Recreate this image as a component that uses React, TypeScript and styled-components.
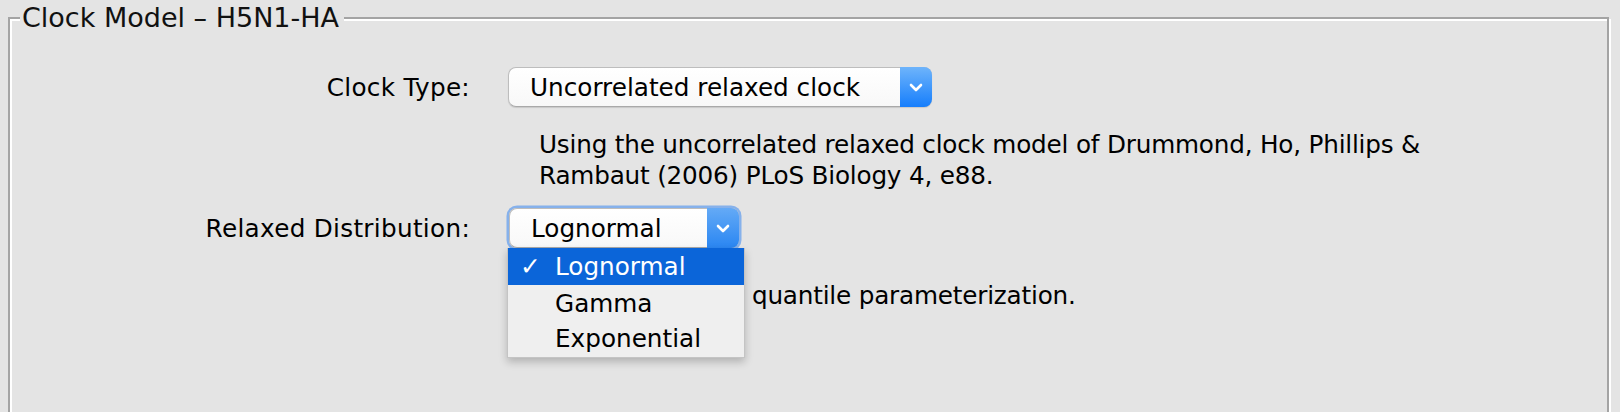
import React from "react";
import styled, { createGlobalStyle } from "styled-components";

const Global = createGlobalStyle`
  html, body { margin: 0; padding: 0; background: #e4e4e4; }
  body {
    font-family: "DejaVu Sans", "Liberation Sans", sans-serif;
    font-size: 24.7px;
    color: #000;
    -webkit-font-smoothing: antialiased;
  }
`;

const Page = styled.div`
  padding: 3px 11px 0 8px;
  height: 412px;
  box-sizing: border-box;
  overflow: hidden;
`;

const Panel = styled.fieldset`
  margin: 0;
  padding: 0;
  min-width: 0;
  height: 470px;
  border: 2px solid #a4a4a4;
  box-shadow: inset 2px 2px 0 #ffffff, 2px 2px 0 #ffffff;
`;

const Legend = styled.legend`
  margin-left: 10px;
  padding: 0 5px 0 2px;
  line-height: 30px;
  font-size: 27px;
  background: #e4e4e4;
  color: #111;
`;

const Row = styled.div<{ $top: number }>`
  display: grid;
  grid-template-columns: 460px auto;
  column-gap: 38px;
  align-items: center;
  justify-items: start;
  margin-top: ${(p) => p.$top}px;
`;

const Label = styled.div`
  justify-self: end;
  white-space: nowrap;
  letter-spacing: 0.3px;
`;

const Desc = styled.div`
  grid-column: 2;
  padding-left: 31px;
  line-height: 31px;
  white-space: nowrap;
  letter-spacing: -0.2px;
`;

const Covered = styled.span`
  letter-spacing: -0.45px;
`;

const ComboWrap = styled.div`
  position: relative;
  margin-left: 1px;
`;

const Combo = styled.div<{ $width: number; $focused?: boolean }>`
  display: flex;
  align-items: stretch;
  width: ${(p) => p.$width}px;
  height: 40px;
  box-sizing: border-box;
  border: 1px solid #bdbdbd;
  border-bottom-color: #a9a9a9;
  border-radius: 8px;
  background: linear-gradient(#ffffff, #f8f8f8);
  box-shadow: ${(p) =>
    p.$focused
      ? "0 0 0 2.5px rgba(118, 168, 236, 0.85)"
      : "0 1px 1px rgba(0, 0, 0, 0.12)"};
`;

const ComboText = styled.div`
  flex: 1;
  display: flex;
  align-items: center;
  padding-left: 21px;
  white-space: nowrap;
`;

const Arrow = styled.div<{ $focused?: boolean }>`
  width: 32px;
  margin: -1px -1px -1px 0;
  border-radius: 0 8px 8px 0;
  background: ${(p) =>
    p.$focused
      ? "linear-gradient(#64aaf6, #2a86f2)"
      : "linear-gradient(#6eb4fb, #167efc)"};
  display: flex;
  align-items: center;
  justify-content: center;
`;

const Menu = styled.div`
  position: absolute;
  top: 100%;
  left: -2px;
  width: 238px;
  box-sizing: border-box;
  background: #efefef;
  border: 1px solid #c4c4c4;
  border-top: none;
  box-shadow: 0 4px 8px rgba(0, 0, 0, 0.22);
  padding-bottom: 1px;
  z-index: 2;
`;

const Item = styled.div<{ $h: number; $selected?: boolean }>`
  display: flex;
  align-items: center;
  height: ${(p) => p.$h}px;
  padding-left: 12px;
  background: ${(p) => (p.$selected ? "#0b65d9" : "transparent")};
  color: ${(p) => (p.$selected ? "#ffffff" : "#000")};
  white-space: nowrap;
`;

const Check = styled.span`
  width: 35px;
  flex: none;
  font-weight: bold;
`;

const Chevron = () => (
  <svg width="14" height="9" viewBox="0 0 14 9">
    <path d="M2 2 L7 7 L12 2" fill="none" stroke="#fff" strokeWidth="2.6" strokeLinecap="round" strokeLinejoin="round" />
  </svg>
);

export default function App() {
  return (
    <>
      <Global />
      <Page>
        <Panel>
          <Legend>Clock Model – H5N1-HA</Legend>
          <Row $top={34}>
            <Label>Clock Type:</Label>
            <Combo $width={424}>
              <ComboText>Uncorrelated relaxed clock</ComboText>
              <Arrow>
                <Chevron />
              </Arrow>
            </Combo>
          </Row>
          <Row $top={22}>
            <Desc>
              Using the uncorrelated relaxed clock model of Drummond, Ho, Phillips &amp;
              <br />
              Rambaut (2006) PLoS Biology 4, e88.
            </Desc>
          </Row>
          <Row $top={17}>
            <Label>Relaxed Distribution:</Label>
            <ComboWrap>
              <Combo $width={230} $focused>
                <ComboText>Lognormal</ComboText>
                <Arrow $focused>
                  <Chevron />
                </Arrow>
              </Combo>
              <Menu>
                <Item $h={37} $selected>
                  <Check>✓</Check>Lognormal
                </Item>
                <Item $h={36}>
                  <Check />Gamma
                </Item>
                <Item $h={35}>
                  <Check />Exponential
                </Item>
              </Menu>
            </ComboWrap>
          </Row>
          <Row $top={32}>
            <Desc>
              <Covered>Using continuous </Covered>quantile parameterization.
            </Desc>
          </Row>
        </Panel>
      </Page>
    </>
  );
}
